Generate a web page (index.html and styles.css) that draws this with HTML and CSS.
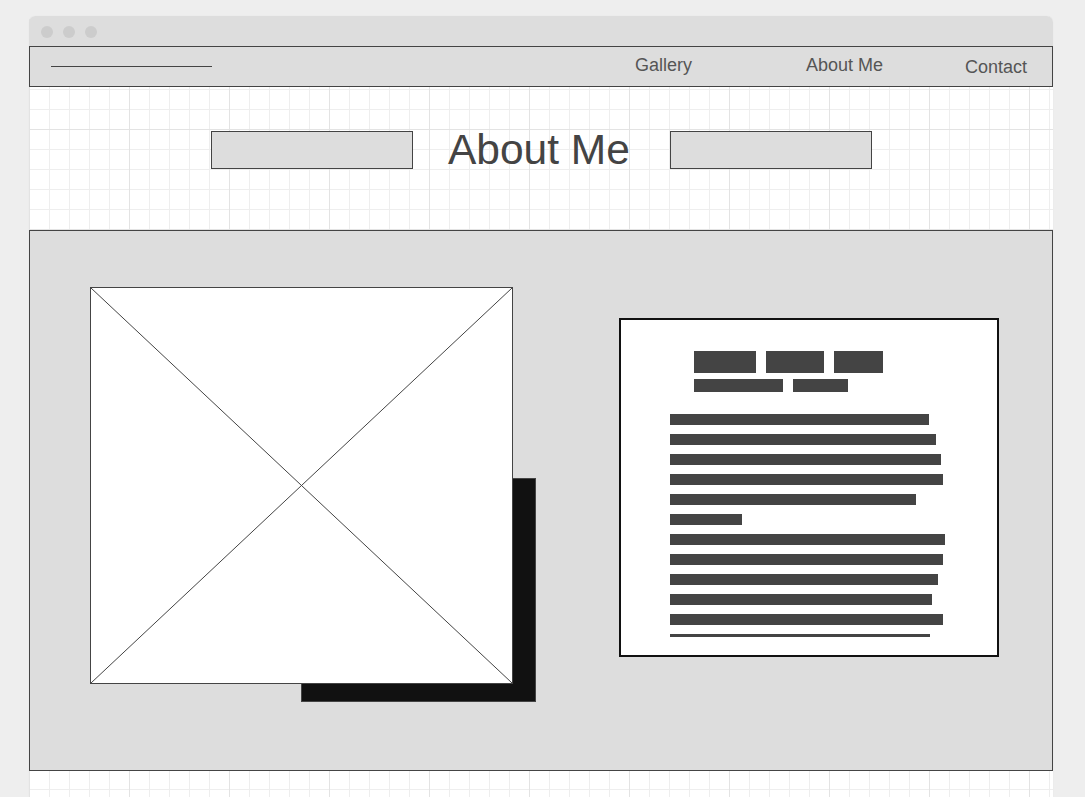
FILE: index.html
```html
<!DOCTYPE html>
<html lang="en">
<head>
<meta charset="utf-8">
<title>About Me</title>
<link rel="stylesheet" href="styles.css">
</head>
<body>
<div class="window">
  <div class="titlebar">
    <span class="dot"></span><span class="dot"></span><span class="dot"></span>
  </div>
  <nav class="nav">
    <div class="logo-line"></div>
    <a class="nav-link gallery">Gallery</a>
    <a class="nav-link about">About Me</a>
    <a class="nav-link contact">Contact</a>
  </nav>
  <header class="hero">
    <div class="hero-box"></div>
    <h1 class="hero-title">About Me</h1>
    <div class="hero-box"></div>
  </header>
  <section class="content">
    <div class="figure">
      <div class="figure-shadow"></div>
      <div class="figure-image">
        <svg class="cross" viewBox="0 0 100 100" preserveAspectRatio="none">
          <line x1="0" y1="0" x2="100" y2="100" vector-effect="non-scaling-stroke"/>
          <line x1="100" y1="0" x2="0" y2="100" vector-effect="non-scaling-stroke"/>
        </svg>
      </div>
    </div>
    <article class="card">
      <div class="card-heading">
        <div class="heading-row">
          <span class="hblock h1a"></span><span class="hblock h1b"></span><span class="hblock h1c"></span>
        </div>
        <div class="heading-row small">
          <span class="hblock h2a"></span><span class="hblock h2b"></span>
        </div>
      </div>
      <div class="card-text">
        <div class="tline" style="width:259px"></div>
        <div class="tline" style="width:266px"></div>
        <div class="tline" style="width:271px"></div>
        <div class="tline" style="width:273px"></div>
        <div class="tline" style="width:246px"></div>
        <div class="tline" style="width:72px"></div>
        <div class="tline" style="width:275px"></div>
        <div class="tline" style="width:273px"></div>
        <div class="tline" style="width:268px"></div>
        <div class="tline" style="width:262px"></div>
        <div class="tline" style="width:273px"></div>
        <div class="tline" style="width:260px"></div>
      </div>
    </article>
  </section>
</div>
</body>
</html>
```
FILE: styles.css
```css
* { box-sizing: border-box; }

html, body {
  margin: 0;
  padding: 0;
}

body {
  background: #eeeeee;
  font-family: "Liberation Sans", Arial, sans-serif;
  overflow: hidden;
}

.window {
  margin: 16px 0 0 29px;
  width: 1024px;
  min-height: 781px;
  border-radius: 6px 6px 0 0;
  overflow: hidden;
  background-color: #ffffff;
  background-image:
    linear-gradient(to right, #e3e3e3 1px, transparent 1px),
    linear-gradient(to bottom, #e3e3e3 1px, transparent 1px),
    linear-gradient(to right, #eeeeee 1px, transparent 1px),
    linear-gradient(to bottom, #eeeeee 1px, transparent 1px);
  background-size: 100px 100px, 100px 100px, 20px 20px, 20px 20px;
  background-position: 0 13px, 0 13px, 0 13px, 0 13px;
  box-shadow: 0 0 1px rgba(0, 0, 0, 0.08);
}

.titlebar {
  height: 30px;
  background: #dddddd;
  display: flex;
  align-items: flex-start;
  gap: 10px;
  padding: 10px 0 0 12px;
}

.dot {
  width: 12px;
  height: 12px;
  border-radius: 50%;
  background: #cccccc;
}

.nav {
  height: 41px;
  border: 1px solid #444444;
  background: #dddddd;
  display: flex;
  align-items: center;
  padding: 0 25px 0 21px;
}

.logo-line {
  width: 161px;
  height: 1px;
  background: #444444;
}

.nav-link {
  font-size: 18px;
  line-height: 20px;
  color: #555555;
  text-decoration: none;
  padding-bottom: 4px;
}

.gallery { margin-left: auto; }
.about { margin-left: 114px; }
.contact { margin-left: 82px; padding-bottom: 0; }

.hero {
  display: flex;
  justify-content: flex-start;
  align-items: center;
  padding: 44px 0 61px 182px;
}

.hero-box {
  flex: none;
  width: 202px;
  height: 38px;
  border: 1px solid #444444;
  background: #dddddd;
}

.hero-title {
  margin: 0 40px 0 35px;
  font-size: 42.5px;
  line-height: 38px;
  font-weight: normal;
  color: #444444;
  white-space: nowrap;
}

.content {
  height: 541px;
  border: 1px solid #444444;
  background: #dddddd;
  display: flex;
  align-items: flex-start;
  padding-left: 60px;
}

.figure {
  position: relative;
  margin-top: 56px;
  width: 423px;
  height: 397px;
  flex: none;
}

.figure-shadow {
  position: absolute;
  left: 211px;
  top: 191px;
  width: 235px;
  height: 224px;
  background: #111111;
  border: 1px solid #444444;
}

.figure-image {
  position: relative;
  width: 100%;
  height: 100%;
  background: #ffffff;
  border: 1px solid #444444;
}

.cross {
  display: block;
  width: 100%;
  height: 100%;
}

.cross line {
  stroke: #444444;
  stroke-width: 1;
}

.card {
  flex: none;
  margin: 87px 0 0 106px;
  width: 380px;
  height: 339px;
  border: 2px solid #111111;
  background: #ffffff;
  padding: 31px 0 0 49px;
}

.card-heading {
  margin-left: 24px;
  display: flex;
  flex-direction: column;
  gap: 6px;
}

.heading-row {
  display: flex;
  gap: 10px;
}

.hblock {
  display: block;
  height: 22px;
  background: #444444;
}

.heading-row.small .hblock { height: 13px; }

.h1a { width: 62px; }
.h1b { width: 58px; }
.h1c { width: 49px; }
.h2a { width: 89px; }
.h2b { width: 55px; }

.card-text {
  margin-top: 22px;
  height: 223px;
  overflow: hidden;
}

.tline {
  height: 11px;
  margin-bottom: 9px;
  background: #444444;
}
```
